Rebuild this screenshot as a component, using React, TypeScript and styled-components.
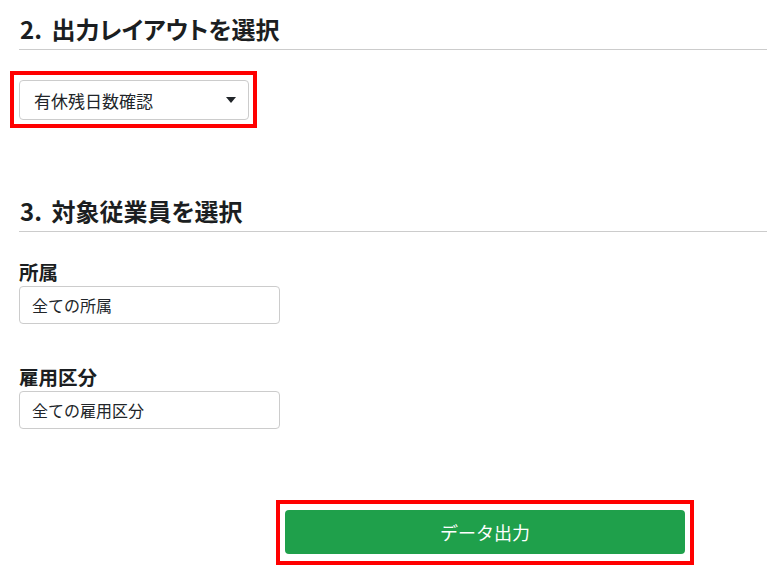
import React from "react";
import styled, { createGlobalStyle } from "styled-components";

const GlobalStyle = createGlobalStyle`
  html, body {
    margin: 0;
    padding: 0;
    background: #ffffff;
  }
  body {
    font-family: "Noto Sans CJK JP", "Noto Sans", sans-serif;
    color: #212529;
  }
`;

const Page = styled.div`
  padding: 13px 0 40px 19px;
  display: flex;
  flex-direction: column;
`;

const Section = styled.section<{ $gap: number }>`
  display: flex;
  flex-direction: column;
  margin-bottom: ${(p) => p.$gap}px;
`;

const Heading = styled.h2`
  margin: 0;
  padding: 0 0 4px 1px;
  font-size: 24px;
  line-height: 32px;
  font-weight: 700;
  font-feature-settings: "palt";
  word-spacing: 4px;
  color: #1b1e21;
  border-bottom: 1px solid #cccccc;
`;

const Body = styled.div<{ $top: number }>`
  display: flex;
  flex-direction: column;
  align-items: flex-start;
  padding-top: ${(p) => p.$top}px;
`;

/* Red annotation frame drawn around a highlighted control */
const Frame = styled.div<{ $pad: string; $margin: string }>`
  display: flex;
  border: 4px solid #ff0000;
  padding: ${(p) => p.$pad};
  margin: ${(p) => p.$margin};
`;

const SelectBox = styled.div`
  box-sizing: border-box;
  width: 230px;
  height: 40px;
  display: flex;
  align-items: center;
  justify-content: space-between;
  padding: 0 12px 0 14px;
  border: 1px solid #cccccc;
  border-radius: 4px;
  font-size: 17px;
  color: #212529;
  background: #fff;
`;

const Caret = styled.svg`
  width: 10px;
  height: 6px;
  display: block;
`;

const Field = styled.div<{ $gap: number }>`
  display: flex;
  flex-direction: column;
  margin-bottom: ${(p) => p.$gap}px;
`;

const Label = styled.label`
  font-size: 19.5px;
  line-height: 28px;
  font-weight: 700;
  color: #1b1e21;
`;

const TextInput = styled.input`
  box-sizing: border-box;
  width: 261px;
  height: 38px;
  padding: 0 12px;
  border: 1px solid #cccccc;
  border-radius: 4px;
  font-family: inherit;
  font-size: 16px;
  color: #212529;
  background: #fff;
  outline: none;
`;

const ButtonRow = styled.div`
  display: flex;
  padding-left: 266px;
`;

const PrimaryButton = styled.button`
  width: 400px;
  height: 44px;
  border: none;
  border-radius: 4px;
  background: #1fa04b;
  color: #ffffff;
  font-family: inherit;
  font-size: 18px;
  cursor: pointer;
`;

export default function App() {
  return (
    <>
      <GlobalStyle />
      <Page>
        <Section $gap={75}>
          <Heading>2. 出力レイアウトを選択</Heading>
          <Body $top={30}>
            <Frame $pad="5px 4px 4px 5px" $margin="-9px 0 -8px -9px">
              <SelectBox>
                <span>有休残日数確認</span>
                <Caret viewBox="0 0 10 6">
                  <path d="M0 0 L10 0 L5 6 Z" fill="#212529" />
                </Caret>
              </SelectBox>
            </Frame>
          </Body>
        </Section>
        <Section $gap={81}>
          <Heading>3. 対象従業員を選択</Heading>
          <Body $top={26}>
            <Field $gap={39}>
              <Label>所属</Label>
              <TextInput readOnly value="全ての所属" />
            </Field>
            <Field $gap={0}>
              <Label>雇用区分</Label>
              <TextInput readOnly value="全ての雇用区分" />
            </Field>
          </Body>
        </Section>
        <ButtonRow>
          <Frame $pad="6px 5px 7px 5px" $margin="-10px 0 -11px -9px">
            <PrimaryButton>データ出力</PrimaryButton>
          </Frame>
        </ButtonRow>
      </Page>
    </>
  );
}
